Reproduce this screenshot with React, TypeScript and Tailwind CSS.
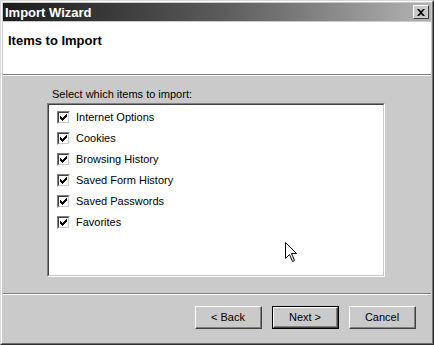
import React from "react";

const items = [
  "Internet Options",
  "Cookies",
  "Browsing History",
  "Saved Form History",
  "Saved Passwords",
  "Favorites",
];

function Check() {
  return (
    <div className="w-[13px] h-[13px] border-t border-l border-t-[#808080] border-l-[#808080] border-b border-r border-b-white border-r-white">
      <div className="w-full h-full border-t border-l border-t-[#404040] border-l-[#404040] border-b border-r border-b-[#cacaca] border-r-[#cacaca] bg-white flex items-center justify-center">
        <svg width="7" height="7" viewBox="0 0 7 7">
          <path d="M0 2h1v3h-1zM1 3h1v3h-1zM2 4h1v3h-1zM3 3h1v3h-1zM4 2h1v3h-1zM5 1h1v3h-1zM6 0h1v3h-1z" fill="#000" />
        </svg>
      </div>
    </div>
  );
}

function Button({ label, def }: { label: string; def?: boolean }) {
  const inner = (
    <div className="h-full border-t border-l border-t-white border-l-white border-b border-r border-b-[#404040] border-r-[#404040]">
      <div className="h-full border-b border-r border-b-[#808080] border-r-[#808080] flex items-center justify-center text-[11px] leading-none text-black">
        {label}
      </div>
    </div>
  );
  return (
    <div className={`w-[67px] h-[23px] ${def ? "border border-black" : ""}`}>
      {inner}
    </div>
  );
}

export default function App() {
  return (
    <div
      className="relative w-[434px] h-[345px] bg-[#cacaca] border-t border-l border-t-[#d8d8d8] border-l-[#d8d8d8] border-b border-r border-b-[#303030] border-r-[#303030] select-none"
      style={{ fontFamily: '"Liberation Sans", Arial, sans-serif' }}
    >
      <div className="w-full h-full border-t border-l border-t-white border-l-white border-b border-r border-b-[#707070] border-r-[#707070] p-px flex flex-col">
        {/* Title bar */}
        <div className="h-[18px] flex items-center justify-between pl-[2px] pr-[2px] bg-gradient-to-r from-[#1c1c1c] via-[#5a5a5a] to-[#b4b4b4]">
          <span className="text-white font-bold text-[13px] leading-none">Import Wizard</span>
          <div className="w-[16px] h-[14px] bg-[#cacaca] border-t border-l border-t-white border-l-white border-b border-r border-b-[#404040] border-r-[#404040] flex items-center justify-center">
            <svg width="8" height="7" viewBox="0 0 8 7">
              <path d="M0 0h2l2 2 2-2h2l-3 3.5 3 3.5h-2l-2-2-2 2h-2l3-3.5z" fill="#000" />
            </svg>
          </div>
        </div>
        {/* Header */}
        <div className="mt-px h-[53px] bg-white border-b border-b-[#808080] pt-[11px] pl-[5px] text-[13px] leading-[15px] font-bold text-black">
          Items to Import
        </div>
        <div className="h-px bg-white" />
        {/* Body */}
        <div className="flex-1 flex flex-col pl-[44px] pt-[11px]">
          <div className="pl-[5px] text-[11px] leading-[14px] text-black">Select which items to import:</div>
          <div className="mt-[2px] w-[338px] h-[174px] border-t border-l border-t-[#808080] border-l-[#808080] border-b border-r border-b-white border-r-white">
            <div className="w-full h-full bg-white border-t border-l border-t-[#404040] border-l-[#404040] border-b border-r border-b-[#cacaca] border-r-[#cacaca] pt-[6px] pl-[8px] flex flex-col gap-[8px]">
              {items.map((it) => (
                <div key={it} className="flex items-center gap-[6px] h-[13px]">
                  <Check />
                  <span className="text-[11px] text-black leading-none">{it}</span>
                </div>
              ))}
            </div>
          </div>
        </div>
        {/* Separator */}
        <div className="h-px bg-[#808080] mt-[15px]" />
        <div className="h-px bg-white" />
        {/* Buttons */}
        <div className="h-[47px] flex items-start justify-end pt-[11px] pr-[15px] gap-[10px]">
          <Button label="< Back" />
          <Button label="Next >" def />
          <Button label="Cancel" />
        </div>
      </div>
      {/* cursor */}
      <svg className="absolute left-[283px] top-[240px]" width="14" height="23" viewBox="0 0 14 23">
        <path d="M1.5 1.5 L1.5 17.5 L5.5 13.5 L8.5 20.5 L10.5 19.5 L7.5 12.5 L12.5 12.5 Z" fill="white" stroke="black" strokeWidth="1" />
      </svg>
    </div>
  );
}
